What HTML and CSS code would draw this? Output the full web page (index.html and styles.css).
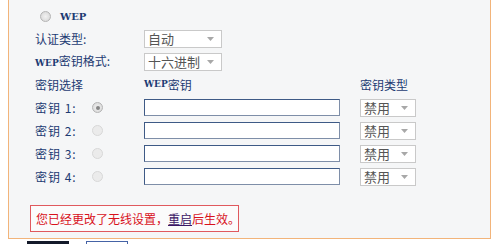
FILE: index.html
```html
<!DOCTYPE html>
<html lang="zh-CN">
<head>
<meta charset="utf-8">
<link rel="stylesheet" href="styles.css">
</head>
<body>
<div class="panel">
  <div class="row row-first">
    <span class="radio"></span>
    <span class="wep">WEP</span>
  </div>
  <div class="row">
    <span class="label">认证类型:</span>
    <span class="sel sel-wide">自动<svg class="arrow" width="7" height="4" viewBox="0 0 7 4"><path d="M0 0H7L3.5 4Z" fill="#a8a8a8"/></svg></span>
  </div>
  <div class="row">
    <span class="label"><b class="wepsm">WEP</b>密钥格式:</span>
    <span class="sel sel-wide">十六进制<svg class="arrow" width="7" height="4" viewBox="0 0 7 4"><path d="M0 0H7L3.5 4Z" fill="#a8a8a8"/></svg></span>
  </div>
  <div class="row">
    <span class="label">密钥选择</span>
    <span class="keycol"><b class="wepsm">WEP</b>密钥</span>
    <span class="typecol">密钥类型</span>
  </div>
  <div class="row">
    <span class="klabel">密钥 1:</span>
    <span class="kradio"><span class="radio checked"></span></span>
    <span class="keycol"><span class="input"></span></span>
    <span class="typecol"><span class="sel sel-narrow">禁用<svg class="arrow" width="7" height="4" viewBox="0 0 7 4"><path d="M0 0H7L3.5 4Z" fill="#a8a8a8"/></svg></span></span>
  </div>
  <div class="row">
    <span class="klabel">密钥 2:</span>
    <span class="kradio"><span class="radio dim"></span></span>
    <span class="keycol"><span class="input"></span></span>
    <span class="typecol"><span class="sel sel-narrow">禁用<svg class="arrow" width="7" height="4" viewBox="0 0 7 4"><path d="M0 0H7L3.5 4Z" fill="#a8a8a8"/></svg></span></span>
  </div>
  <div class="row">
    <span class="klabel">密钥 3:</span>
    <span class="kradio"><span class="radio dim"></span></span>
    <span class="keycol"><span class="input"></span></span>
    <span class="typecol"><span class="sel sel-narrow">禁用<svg class="arrow" width="7" height="4" viewBox="0 0 7 4"><path d="M0 0H7L3.5 4Z" fill="#a8a8a8"/></svg></span></span>
  </div>
  <div class="row">
    <span class="klabel">密钥 4:</span>
    <span class="kradio"><span class="radio dim"></span></span>
    <span class="keycol"><span class="input"></span></span>
    <span class="typecol"><span class="sel sel-narrow">禁用<svg class="arrow" width="7" height="4" viewBox="0 0 7 4"><path d="M0 0H7L3.5 4Z" fill="#a8a8a8"/></svg></span></span>
  </div>
  <div class="notice">您已经更改了无线设置，<a class="restart" href="#">重启</a>后生效。</div>
</div>
<div class="buttons">
  <span class="btn btn-dark"></span>
  <span class="btn btn-light"></span>
</div>
</body>
</html>
```
FILE: styles.css
```css
html, body {
  margin: 0;
  padding: 0;
  background: #ffffff;
}
body {
  height: 244px;
  overflow: hidden;
  font-family: "Noto Sans CJK SC", "Liberation Sans", sans-serif;
  font-size: 12px;
  color: #1d3b73;
}
.panel {
  margin-left: 8px;
  width: 481px;
  height: 232px;
  padding-top: 6px;
  box-sizing: content-box;
  background: #f5f6f7;
  border-left: 1px solid #f2b47a;
  border-right: 1px solid #f2b47a;
  border-bottom: 1px solid #f2b47a;
  display: flex;
  flex-direction: column;
}
.row {
  display: flex;
  align-items: center;
  height: 23px;
  line-height: 23px;
  white-space: nowrap;
}
.row-first {
  height: 21px;
  padding-left: 31px;
}
.radio {
  display: inline-block;
  width: 11px;
  height: 11px;
  border-radius: 50%;
  border: 1px solid #b4b4b4;
  background: radial-gradient(circle at 50% 50%, #f2f2f2 0, #d4d4d4 100%);
  box-sizing: border-box;
  position: relative;
}
.radio.checked::after {
  content: "";
  position: absolute;
  left: 2.5px;
  top: 2.5px;
  width: 4px;
  height: 4px;
  border-radius: 50%;
  background: #858585;
}
.radio.dim {
  border-color: #d8d8d8;
  background: #ebebeb;
}
.wep {
  margin-left: 9px;
  font-family: "DejaVu Serif", serif;
  font-weight: bold;
  font-size: 10px;
  color: #1d3b73;
}
.wepsm {
  font-family: "DejaVu Serif", serif;
  font-weight: bold;
  font-size: 9px;
}
.label {
  margin-left: 26px;
  width: 109px;
  flex: none;
}
.klabel {
  margin-left: 26px;
  width: 57px;
  flex: none;
  letter-spacing: 1px;
}
.kradio {
  width: 52px;
  flex: none;
  display: flex;
  align-items: center;
}
.keycol {
  width: 216px;
  flex: none;
  display: flex;
  align-items: center;
}
.typecol {
  flex: none;
  display: flex;
  align-items: center;
}
.sel {
  display: inline-flex;
  align-items: center;
  justify-content: space-between;
  height: 18px;
  line-height: 16px;
  box-sizing: border-box;
  border: 1px solid #c9c9c9;
  background: #ffffff;
  color: #555555;
  font-size: 13px;
  padding: 0 7px 0 3px;
}
.sel-wide {
  width: 78px;
}
.sel-narrow {
  width: 56px;
}
.arrow {
  flex: none;
}
.input {
  display: block;
  width: 196px;
  height: 17px;
  box-sizing: border-box;
  border: 1px solid #3e5a86;
  border-right-color: #7e8ea8;
  border-bottom-color: #7e8ea8;
  background: #ffffff;
}
.notice {
  margin: 17px 0 0 21px;
  width: 209px;
  height: 27px;
  box-sizing: border-box;
  border: 1px solid #e0595e;
  background: #fbfbfb;
  color: #d8121c;
  line-height: 25px;
  padding-left: 5px;
  white-space: nowrap;
}
.restart {
  color: #3b1766;
  text-decoration: underline;
}
.buttons {
  display: flex;
  padding: 2px 0 0 27px;
  gap: 17px;
}
.btn {
  display: block;
  width: 42px;
  height: 3px;
  box-sizing: border-box;
}
.btn-dark {
  background: #141a2a;
}
.btn-light {
  background: #ffffff;
  border: 1px solid #4563a6;
  border-bottom: none;
}
```
